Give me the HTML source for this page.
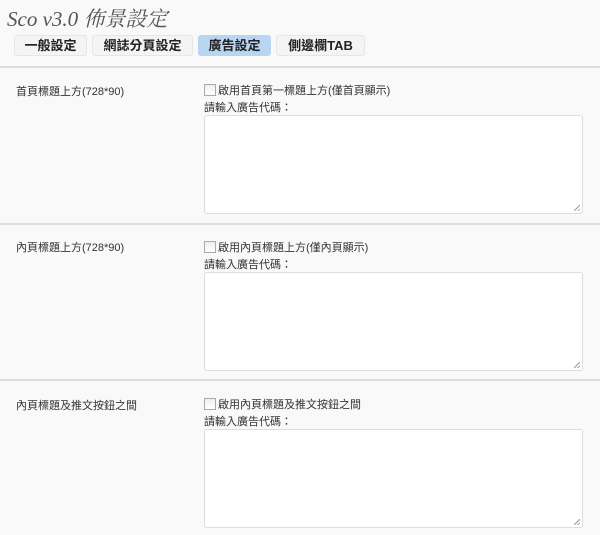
<!DOCTYPE html>
<html><head><meta charset="utf-8"><style>
body{margin:0;width:600px;height:535px;background:#f9f9f9;font-family:"Liberation Sans","Noto Sans CJK TC",sans-serif;overflow:hidden;position:relative;color:#333}
.t{position:absolute;left:7px;top:3px;font-family:"Liberation Serif","Noto Serif CJK SC",serif;font-style:italic;font-size:21px;color:#555}
.tab{position:absolute;top:35px;height:19px;line-height:19px;font-size:13px;font-weight:bold;color:#222;background:#f4f4f4;border:1px solid #e6e6e6;border-radius:3px;text-align:center}
.tab.on{background:#b9d5f2;border-color:#b9d5f2}
.hr{position:absolute;left:0;width:600px;height:2px;background:#ddd}
.lab{position:absolute;left:16px;font-size:11px;color:#333}
.cb{position:absolute;left:204px;width:10px;height:10px;border:1px solid #aaa;background:linear-gradient(#eee,#fff)}
.ct{position:absolute;left:218px;font-size:11px;color:#333}
.p{position:absolute;left:204px;font-size:11px;color:#333}
.ta{position:absolute;left:204px;width:377px;height:97px;background:#fff;border:1px solid #ddd;border-radius:3px}
.ta:after{content:"";position:absolute;right:2px;bottom:2px;width:6px;height:6px;background:linear-gradient(135deg,transparent 45%,#999 45%,#999 55%,transparent 55%,transparent 75%,#999 75%,#999 85%,transparent 85%)}
</style></head><body>
<div class="t">Sco v3.0 佈景設定</div>
<div class="tab" style="left:14px;width:71px">一般設定</div>
<div class="tab" style="left:92px;width:99px">網誌分頁設定</div>
<div class="tab on" style="left:198px;width:71px">廣告設定</div>
<div class="tab" style="left:276px;width:87px">側邊欄TAB</div>

<div class="hr" style="top:66px"></div>
<div class="lab" style="top:83px">首頁標題上方(728*90)</div>
<div class="cb" style="top:84px"></div>
<div class="ct" style="top:82px">啟用首頁第一標題上方(僅首頁顯示)</div>
<div class="p" style="top:99px">請輸入廣告代碼：</div>
<div class="ta" style="top:115px"></div>

<div class="hr" style="top:223px"></div>
<div class="lab" style="top:239px">內頁標題上方(728*90)</div>
<div class="cb" style="top:241px"></div>
<div class="ct" style="top:239px">啟用內頁標題上方(僅內頁顯示)</div>
<div class="p" style="top:256px">請輸入廣告代碼：</div>
<div class="ta" style="top:272px"></div>

<div class="hr" style="top:379px"></div>
<div class="lab" style="top:397px">內頁標題及推文按鈕之間</div>
<div class="cb" style="top:398px"></div>
<div class="ct" style="top:396px">啟用內頁標題及推文按鈕之間</div>
<div class="p" style="top:413px">請輸入廣告代碼：</div>
<div class="ta" style="top:429px"></div>
</body></html>
